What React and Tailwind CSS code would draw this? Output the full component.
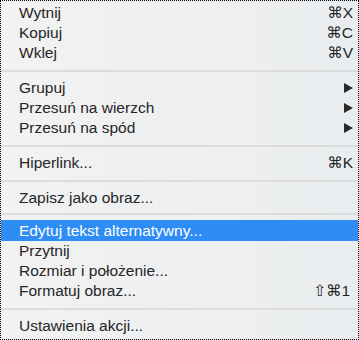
import React from "react";

const Arrow = () => (
  <svg width="9" height="10" viewBox="0 0 9 10" className="block">
    <polygon points="0,0 9,5 0,10" fill="#2b2b2b" />
  </svg>
);

function Row({ label, shortcut, arrow, active, h = "h-[20px]" }) {
  return (
    <div
      className={`flex items-center justify-between pl-[18px] pr-[5px] ${h} ${
        active ? "bg-[#2e8df5] text-white" : "text-[#262626]"
      }`}
    >
      <span className="leading-none">{label}</span>
      {shortcut && (
        <span className="leading-none font-['Liberation_Sans','DejaVu_Sans',sans-serif]">{shortcut}</span>
      )}
      {arrow && <Arrow />}
    </div>
  );
}

function Sep({ h = "h-[15px]", off = "pt-[7px]" }) {
  return (
    <div className={`${h} ${off}`}>
      <div className="h-[2px] bg-[#dcdcdc]" />
    </div>
  );
}

export default function App() {
  return (
    <div className="w-[359px] h-[340px] box-border border border-dotted border-black bg-gradient-to-r from-[#f2f2f2] to-[#eaedef] pt-[2px] font-['Liberation_Sans','DejaVu_Sans',sans-serif] text-[15.5px] overflow-hidden">
      <Row label="Wytnij" shortcut="⌘X" />
      <Row label="Kopiuj" shortcut="⌘C" />
      <Row label="Wklej" shortcut="⌘V" />
      <Sep />
      <Row label="Grupuj" arrow />
      <Row label="Przesuń na wierzch" arrow />
      <Row label="Przesuń na spód" arrow />
      <Sep />
      <Row label="Hiperlink..." shortcut="⌘K" />
      <Sep />
      <Row label="Zapisz jako obraz..." />
      <Sep h="h-[12px]" off="pt-[5px]" />
      <Row label="Edytuj tekst alternatywny..." active h="h-[21px]" />
      <Row label="Przytnij" />
      <Row label="Rozmiar i położenie..." />
      <Row label="Formatuj obraz..." shortcut={<span className="mr-[3px]">⇧⌘1</span>} />
      <Sep />
      <Row label="Ustawienia akcji..." />
    </div>
  );
}
